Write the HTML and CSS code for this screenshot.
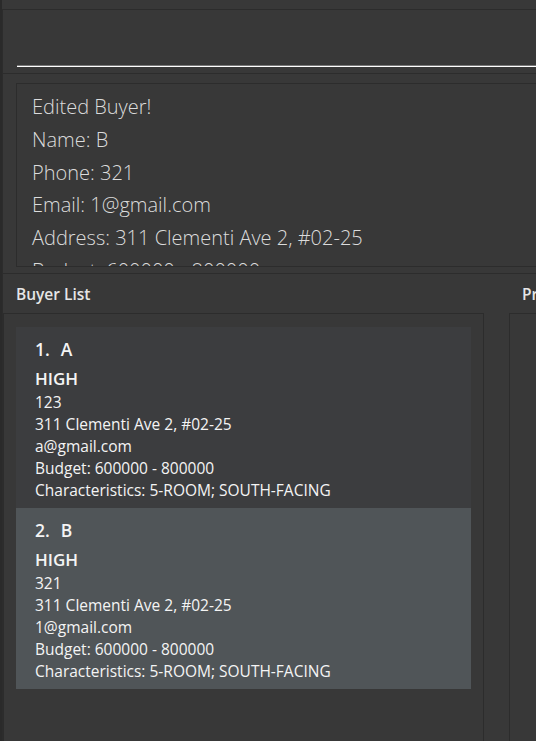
FILE: index.html
```html
<!DOCTYPE html>
<html>
<head>
<meta charset="utf-8">
<link rel="stylesheet" href="styles.css">
</head>
<body>
<div class="app">
  <div class="menubar"></div>
  <div class="main">
    <div class="command">
      <div class="command-field"></div>
    </div>
    <div class="result">
      <div class="result-box">
        <div class="result-line">Edited Buyer!</div>
        <div class="result-line">Name: B</div>
        <div class="result-line">Phone: 321</div>
        <div class="result-line">Email: 1@gmail.com</div>
        <div class="result-line">Address: 311 Clementi Ave 2, #02-25</div>
        <div class="result-line">Budget: 600000 - 800000</div>
      </div>
    </div>
    <div class="lists">
      <div class="list-col buyers">
        <div class="list-title">Buyer List</div>
        <div class="list-panel">
          <div class="card">
            <div class="card-name"><span class="card-index">1.</span><span>A</span></div>
            <div class="card-priority">HIGH</div>
            <div class="card-line">123</div>
            <div class="card-line">311 Clementi Ave 2, #02-25</div>
            <div class="card-line">a@gmail.com</div>
            <div class="card-line">Budget: 600000 - 800000</div>
            <div class="card-line">Characteristics: 5-ROOM; SOUTH-FACING</div>
          </div>
          <div class="card selected">
            <div class="card-name"><span class="card-index">2.</span><span>B</span></div>
            <div class="card-priority">HIGH</div>
            <div class="card-line">321</div>
            <div class="card-line">311 Clementi Ave 2, #02-25</div>
            <div class="card-line">1@gmail.com</div>
            <div class="card-line">Budget: 600000 - 800000</div>
            <div class="card-line">Characteristics: 5-ROOM; SOUTH-FACING</div>
          </div>
        </div>
      </div>
      <div class="list-col properties">
        <div class="list-title">Property List</div>
        <div class="list-panel"></div>
      </div>
    </div>
  </div>
</div>
</body>
</html>
```

FILE: styles.css
```css
html, body {
  margin: 0;
  padding: 0;
  background: #383838;
  overflow: hidden;
}
body {
  width: 536px;
  height: 741px;
  font-family: "Open Sans", "Noto Sans", sans-serif;
}
.app {
  width: 1000px;
  height: 741px;
  border-left: 2px solid #2a2a2a;
  display: flex;
  flex-direction: column;
  box-sizing: border-box;
}
.menubar {
  height: 9px;
  border-bottom: 1px solid #2c2c2c;
  flex: none;
}
.main {
  flex: 1;
  display: flex;
  flex-direction: column;
  border-left: 1px solid #2c2c2c;
}
.command {
  height: 64px;
  border-bottom: 1px solid #2c2c2c;
  padding: 0 0 0 14px;
  box-sizing: border-box;
  flex: none;
}
.command-field {
  height: 57px;
  border-bottom: 1px solid #ffffff;
  box-shadow: 0 -1px 0 #777777 inset;
  box-sizing: border-box;
}
.result {
  height: 200px;
  border-bottom: 1px solid #2c2c2c;
  padding: 9px 0 0 13px;
  box-sizing: border-box;
  flex: none;
}
.result-box {
  height: 184px;
  border: 1px solid #2c2c2c;
  border-right: none;
  overflow: hidden;
  padding: 7px 0 0 15px;
  box-sizing: border-box;
}
.result-line {
  font-size: 20px;
  font-weight: 300;
  line-height: 32.8px;
  color: #dcdcdc;
  white-space: nowrap;
}
.lists {
  flex: 1;
  display: flex;
  gap: 25px;
  min-height: 0;
}
.list-col {
  display: flex;
  flex-direction: column;
}
.buyers {
  width: 481px;
}
.properties {
  width: 400px;
}
.list-title {
  height: 39px;
  padding: 8px 0 0 13px;
  box-sizing: border-box;
  color: #e6e6e6;
  font-weight: 600;
  font-size: 15.5px;
  line-height: 24px;
  white-space: nowrap;
}
.list-panel {
  flex: 1;
  border: 1px solid #2c2c2c;
  border-bottom: none;
  padding: 13px 12px 0 12px;
  box-sizing: border-box;
}
.card {
  background: #3c3d3f;
  padding: 10px 0 7px 19px;
  color: #f4f4f4;
}
.card.selected {
  background: #505558;
}
.card-name {
  font-size: 17.5px;
  font-weight: 600;
  line-height: 24px;
  white-space: nowrap;
}
.card-index {
  margin-right: 11px;
}
.card-priority {
  font-size: 17px;
  font-weight: 600;
  line-height: 24px;
  margin-top: 6px;
}
.card-line {
  font-size: 15.5px;
  line-height: 22px;
  white-space: nowrap;
}
```
